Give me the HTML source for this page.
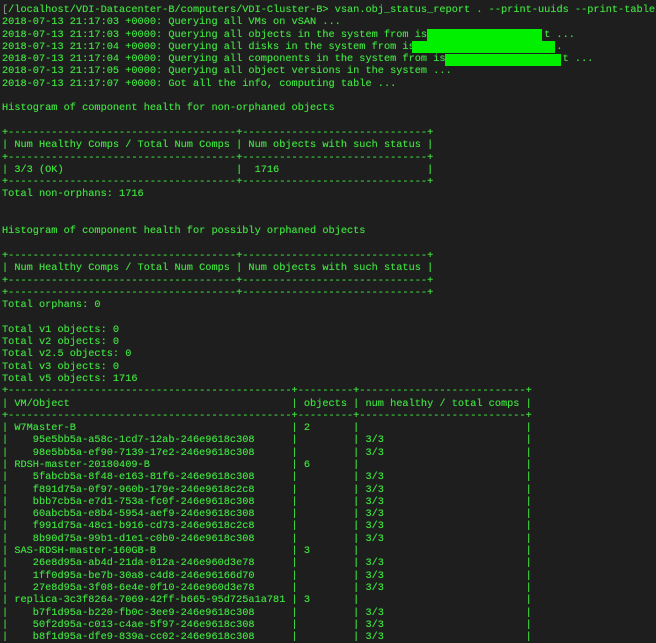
<!DOCTYPE html>
<html><head><meta charset="utf-8"><style>
html,body{margin:0;padding:0;background:#1e1e1e;width:656px;height:643px;overflow:hidden}
pre{margin:0;position:absolute;left:2px;top:4px;font-family:"Liberation Mono",monospace;font-size:10.27px;line-height:12.3px;color:#3fdc3f;white-space:pre;text-shadow:0 0 0.4px #3fdc3f}
.r{position:absolute;background:#00f000}
.c{color:#888}
</style></head><body>
<pre><span class="c">[</span>/localhost/VDI-Datacenter-B/computers/VDI-Cluster-B&gt; vsan.obj_status_report . --print-uuids --print-table
2018-07-13 21:17:03 +0000: Querying all VMs on vSAN ...
2018-07-13 21:17:03 +0000: Querying all objects in the system from is                   t ...
2018-07-13 21:17:04 +0000: Querying all disks in the system from is                       .
2018-07-13 21:17:04 +0000: Querying all components in the system from is                   t ...
2018-07-13 21:17:05 +0000: Querying all object versions in the system ...
2018-07-13 21:17:07 +0000: Got all the info, computing table ...

Histogram of component health for non-orphaned objects

+-------------------------------------+------------------------------+
| Num Healthy Comps / Total Num Comps | Num objects with such status |
+-------------------------------------+------------------------------+
| 3/3 (OK)                            |  1716                        |
+-------------------------------------+------------------------------+
Total non-orphans: 1716


Histogram of component health for possibly orphaned objects

+-------------------------------------+------------------------------+
| Num Healthy Comps / Total Num Comps | Num objects with such status |
+-------------------------------------+------------------------------+
+-------------------------------------+------------------------------+
Total orphans: 0

Total v1 objects: 0
Total v2 objects: 0
Total v2.5 objects: 0
Total v3 objects: 0
Total v5 objects: 1716
+----------------------------------------------+---------+---------------------------+
| VM/Object                                    | objects | num healthy / total comps |
+----------------------------------------------+---------+---------------------------+
| W7Master-B                                   | 2       |                           |
|    95e5bb5a-a58c-1cd7-12ab-246e9618c308      |         | 3/3                       |
|    98e5bb5a-ef90-7139-17e2-246e9618c308      |         | 3/3                       |
| RDSH-master-20180409-B                       | 6       |                           |
|    5fabcb5a-8f48-e163-81f6-246e9618c308      |         | 3/3                       |
|    f891d75a-0f97-960b-179e-246e9618c2c8      |         | 3/3                       |
|    bbb7cb5a-e7d1-753a-fc0f-246e9618c308      |         | 3/3                       |
|    60abcb5a-e8b4-5954-aef9-246e9618c308      |         | 3/3                       |
|    f991d75a-48c1-b916-cd73-246e9618c2c8      |         | 3/3                       |
|    8b90d75a-99b1-d1e1-c0b0-246e9618c308      |         | 3/3                       |
| SAS-RDSH-master-160GB-B                      | 3       |                           |
|    26e8d95a-ab4d-21da-012a-246e960d3e78      |         | 3/3                       |
|    1ff0d95a-be7b-30a8-c4d8-246e96166d70      |         | 3/3                       |
|    27e8d95a-3f08-6e4e-0f10-246e960d3e78      |         | 3/3                       |
| replica-3c3f8264-7069-42ff-b665-95d725a1a781 | 3       |                           |
|    b7f1d95a-b220-fb0c-3ee9-246e9618c308      |         | 3/3                       |
|    50f2d95a-c013-c4ae-5f97-246e9618c308      |         | 3/3                       |
|    b8f1d95a-dfe9-839a-cc02-246e9618c308      |         | 3/3                       |</pre>
<div class="r" style="left:427px;top:29px;width:115px;height:12px"></div>
<div class="r" style="left:412px;top:41px;width:143px;height:12px"></div>
<div class="r" style="left:445px;top:54px;width:116px;height:12px"></div>
</body></html>
